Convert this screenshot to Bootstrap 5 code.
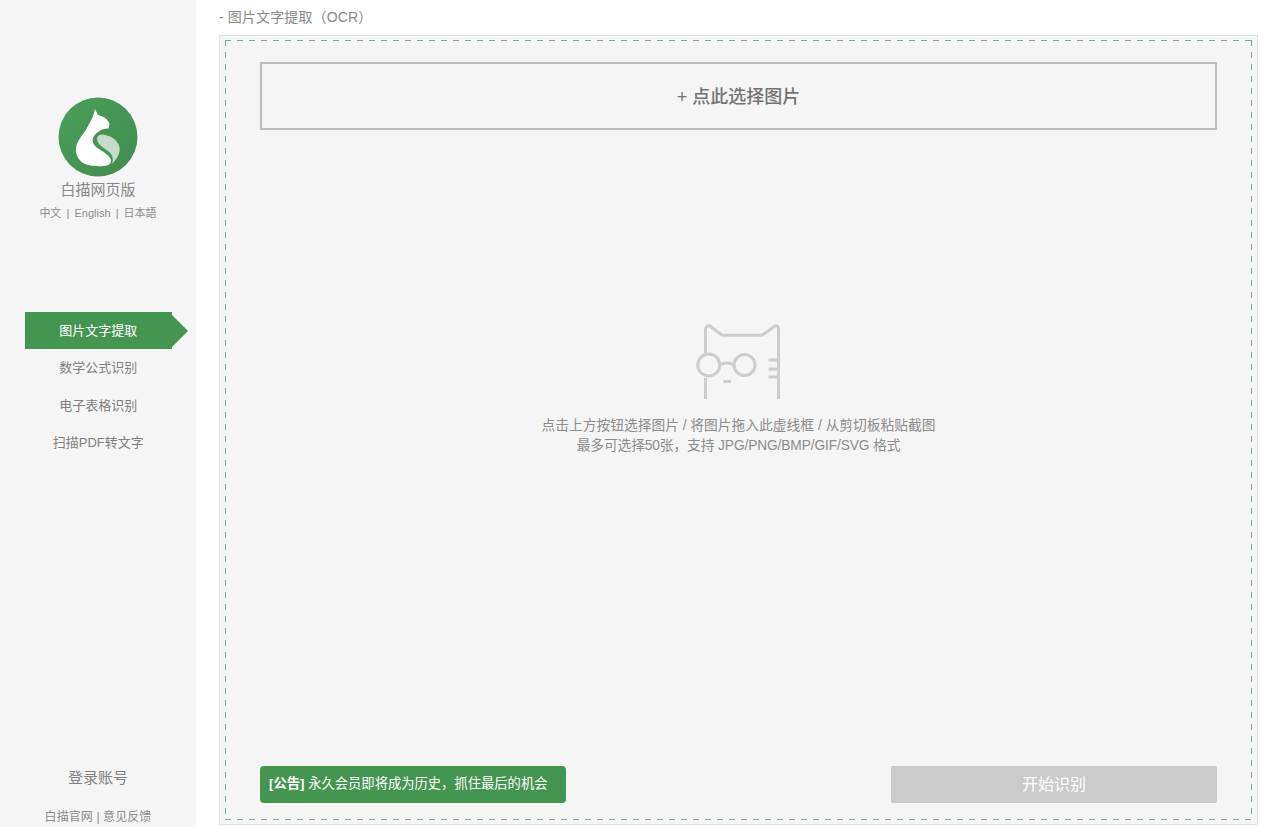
<!DOCTYPE html>
<html lang="zh">
<head>
  <meta charset="UTF-8" />
  <meta name="viewport" content="width=device-width, initial-scale=1" />
  <title>白描网页版</title>
  <link href="https://cdn.jsdelivr.net/npm/bootstrap@5.3.0/dist/css/bootstrap.min.css" rel="stylesheet" />
  <style>
    html, body {
      height: 827px;
      overflow: hidden;
    }
    body {
      font-family: "Liberation Sans", "Noto Sans CJK SC", sans-serif;
      background: #fff;
      color: #888;
    }
    .side-bar {
      width: 196px;
      height: 827px;
      background: #f5f5f5;
      padding-top: 97px;
    }
    .app-name {
      font-size: 15px;
      line-height: 20px;
      margin-top: 3px;
    }
    .lang-row {
      font-size: 11px;
      line-height: 16px;
      margin-top: 5px;
      word-spacing: -.5px;
      color: #8c8c8c;
    }
    .side-nav {
      margin: 91px 8px 0 25px;
    }
    .side-nav .nav-link {
      width: 146.5px;
      height: 37.4px;
      padding: 0;
      line-height: 37.4px;
      font-size: 13px;
      text-align: center;
      color: #808080;
      position: relative;
    }
    .side-nav .nav-link.active {
      background: #43954f;
      color: #fff;
    }
    .side-nav .nav-link.active::after {
      content: "";
      position: absolute;
      left: 146.5px;
      top: 3px;
      border-left: 16px solid #43954f;
      border-top: 16px solid transparent;
      border-bottom: 16px solid transparent;
    }
    .login-link {
      font-size: 15px;
      line-height: 20px;
      color: #808080;
    }
    .foot-links {
      font-size: 12px;
      line-height: 16px;
      margin: 21px 0 2px;
      letter-spacing: .1px;
      color: #8c8c8c;
    }
    .main-area {
      width: 1039px;
      margin-left: 23px;
    }
    .page-title {
      font-size: 14px;
      line-height: 20px;
      letter-spacing: .13px;
      padding-top: 7px;
      height: 35px;
      color: #888;
    }
    .ocr-panel {
      height: 790px;
      padding: 4px 5px;
      background: #f5f5f5;
      border: 1px solid #e2e2e2;
    }
    .drop-zone {
      height: 100%;
      padding: 22px 35px 17px;
      background-image:
        repeating-linear-gradient(90deg, #78ad87 0 6px, transparent 6px 12px),
        repeating-linear-gradient(90deg, #78ad87 0 6px, transparent 6px 12px),
        repeating-linear-gradient(180deg, #78ad87 0 6px, transparent 6px 12px),
        repeating-linear-gradient(180deg, #78ad87 0 6px, transparent 6px 12px);
      background-size: 100% 1px, 100% 1px, 1px 100%, 1px 100%;
      background-position: left top, left bottom, left top, right top;
      background-repeat: no-repeat;
    }
    .pick-btn {
      height: 68px;
      padding-top: 8px;
      border: 2px solid #bdbdbd;
      border-radius: 0;
      font-size: 18px;
      font-weight: 500;
      color: #737373;
      background: transparent;
    }
    .hint-box {
      padding-top: 190px;
      font-size: 13.75px;
      line-height: 20px;
      color: #8c8c8c;
    }
    .hint-box svg {
      display: block;
      margin: 0 auto 16px;
    }
    .hint-sub {
      letter-spacing: -.12px;
    }
    .notice-bar {
      width: 306px;
      height: 37px;
      padding-left: 9px;
      line-height: 36px;
      font-size: 13.3px;
      color: #fff;
      background: #43954f;
      border-radius: 4px;
    }
    .start-btn.btn:disabled {
      width: 326px;
      height: 37px;
      padding: 0;
      font-size: 16px;
      color: #fff;
      background: #cbcbcb;
      border: 0;
      border-radius: 2px;
      opacity: 1;
    }
  </style>
</head>
<body>
  <div class="d-flex">
    <!-- Sidebar -->
    <div class="side-bar d-flex flex-column text-center">
      <svg class="d-block mx-auto" width="80" height="80" viewBox="0 0 80 80">
        <defs>
          <linearGradient id="logoBg" x1="0" y1="0" x2="1" y2="1">
            <stop offset="0" stop-color="#4b9e5b" />
            <stop offset="1" stop-color="#3f8d4c" />
          </linearGradient>
        </defs>
        <circle cx="40" cy="40" r="39.5" fill="url(#logoBg)" />
        <path d="M39 42 C39 39 41 37.5 44 37.5 C52 38 60 43 61.5 50 C62.5 56 59 62 54 67 C56 61 54 57 50 54 C45 50.5 39 47 39 42 Z" fill="#c6dccb" />
        <path d="M37 12 L40 18 C45 19 50 22 51.5 27 L50.5 31.5 C44 31 37 36 35 41 C33.5 46 37 49.5 41 52 C47 56 53 59 53 64 C53 66.5 51 68 49 68.5 C44 69.5 36 69.5 30 68 C22 66 17 59 18 51 C19 43 26 37 30 29 C33 24 36 18 37 12 Z" fill="#fff" />
      </svg>
      <div class="app-name">白描网页版</div>
      <div class="lang-row">中文&nbsp;&nbsp;|&nbsp;&nbsp;English&nbsp;&nbsp;|&nbsp;&nbsp;日本語</div>
      <nav class="side-nav nav flex-column">
        <a class="nav-link active" href="#">图片文字提取</a>
        <a class="nav-link" href="#">数学公式识别</a>
        <a class="nav-link" href="#">电子表格识别</a>
        <a class="nav-link" href="#">扫描PDF转文字</a>
      </nav>
      <div class="mt-auto">
        <div class="login-link">登录账号</div>
        <div class="foot-links">白描官网 | 意见反馈</div>
      </div>
    </div>

    <!-- Main -->
    <div class="main-area">
      <div class="page-title">- 图片文字提取（OCR）</div>
      <div class="ocr-panel">
        <div class="drop-zone d-flex flex-column">
          <button class="pick-btn btn w-100" type="button">+ 点此选择图片</button>
          <div class="hint-box flex-grow-1 d-flex flex-column align-items-center text-center">
            <svg width="90" height="80" viewBox="0 0 90 80" fill="none" stroke="#cdcdcd" stroke-width="3">
              <path d="M11.5 33 V10 Q11.5 5 16 6 L28 15.3 H68 L81 6 Q84.5 5 84.5 10 V79" stroke-linejoin="round" />
              <path d="M11.5 58 V79" />
              <circle cx="14.8" cy="45" r="11" />
              <circle cx="50.5" cy="45" r="10.5" />
              <path d="M25.8 45 Q33 41 40 45" />
              <path d="M29.5 61.5 H37" />
              <path d="M74.5 40 H84 M74.5 49 H84 M74.5 57 H84" />
            </svg>
            <div>点击上方按钮选择图片 / 将图片拖入此虚线框 / 从剪切板粘贴截图</div>
            <div class="hint-sub">最多可选择50张，支持 JPG/PNG/BMP/GIF/SVG 格式</div>
          </div>
          <div class="d-flex justify-content-between">
            <div class="notice-bar"><b>[公告]</b> 永久会员即将成为历史，抓住最后的机会</div>
            <button class="start-btn btn" type="button" disabled>开始识别</button>
          </div>
        </div>
      </div>
    </div>
  </div>
</body>
</html>
